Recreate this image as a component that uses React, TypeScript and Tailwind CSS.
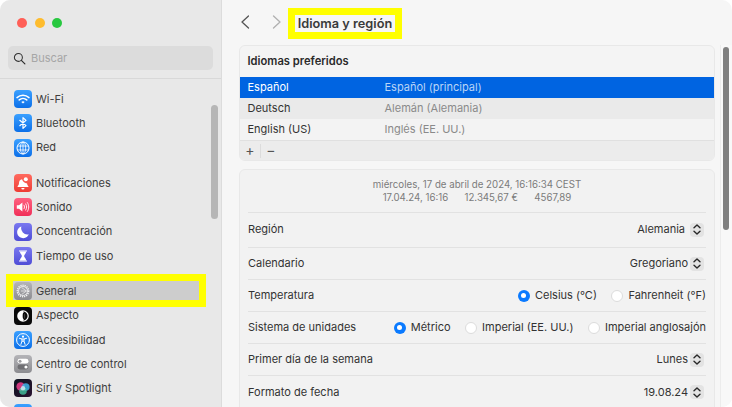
import React from "react";

const Tile = ({ cls, children }: { cls: string; children?: React.ReactNode }) => (
  <div className={`w-[18px] h-[18px] rounded-[4px] shrink-0 flex items-center justify-center overflow-hidden ${cls}`}>
    <svg viewBox="0 0 18 18" width="18" height="18" fill="none">{children}</svg>
  </div>
);

const blue = "bg-linear-to-b from-[#3aa0ff] to-[#0a6fe8]";
const red = "bg-linear-to-b from-[#ff6a5f] to-[#ee3b34]";
const pink = "bg-linear-to-b from-[#ff5f80] to-[#f02d58]";
const indigo = "bg-linear-to-b from-[#7a78f0] to-[#4f4cd6]";
const gray = "bg-linear-to-b from-[#b4b4b8] to-[#8c8c90]";

const icons: Record<string, React.ReactNode> = {
  wifi: (
    <Tile cls={blue}>
      <path d="M3 7.6c3.4-3.1 8.6-3.1 12 0" stroke="#fff" strokeWidth="1.5" strokeLinecap="round" />
      <path d="M5.2 9.9c2.2-2 5.4-2 7.6 0" stroke="#fff" strokeWidth="1.5" strokeLinecap="round" />
      <path d="M7.3 11.9c1-.8 2.4-.8 3.4 0L9 13.6z" fill="#fff" />
    </Tile>
  ),
  bt: (
    <Tile cls={blue}>
      <path d="M5.8 6.3 12 11.6 9 14.4V3.6l3 2.8-6.2 5.3" stroke="#fff" strokeWidth="1.2" strokeLinejoin="round" strokeLinecap="round" />
    </Tile>
  ),
  red: (
    <Tile cls={blue}>
      <circle cx="9" cy="9" r="6" stroke="#fff" strokeWidth="1" />
      <ellipse cx="9" cy="9" rx="2.7" ry="6" stroke="#fff" strokeWidth=".8" />
      <path d="M3.4 7h11.2M3.4 11h11.2M9 3v12" stroke="#fff" strokeWidth=".8" />
    </Tile>
  ),
  notif: (
    <Tile cls={red}>
      <path d="M8 5.2c-2 .3-3 1.8-3 3.8 0 1.6-.7 2.4-1.4 3.2v.8h10.8v-.8c-.7-.8-1.3-1.6-1.3-2.8C11 9.2 8.8 8 8 5.2z" fill="#fff" />
      <path d="M7.3 14h3.2a1.6 1.6 0 0 1-3.2 0z" fill="#fff" />
      <circle cx="11.8" cy="5.2" r="2" fill="#fff" />
    </Tile>
  ),
  sound: (
    <Tile cls={pink}>
      <path d="M2.8 7.2h2.2L8.4 4.6v8.8L5 10.8H2.8z" fill="#fff" />
      <path d="M10 7.2c.7 1.1.7 2.5 0 3.6M11.7 5.9c1.2 1.9 1.2 4.3 0 6.2M13.4 4.6c1.8 2.7 1.8 6.1 0 8.8" stroke="#fff" strokeWidth=".9" strokeLinecap="round" />
    </Tile>
  ),
  focus: (
    <Tile cls={indigo}>
      <path d="M7.4 3.4a6 6 0 1 0 7.4 7.8A6.2 6.2 0 0 1 7.4 3.4z" fill="#fff" />
    </Tile>
  ),
  time: (
    <Tile cls={indigo}>
      <path d="M5 3.4h8v1.1H5zM5 13.5h8v1.1H5z" fill="#fff" />
      <path d="M5.9 4.5h6.2c0 2.2-2 3.2-2 4.5s2 2.3 2 4.5H5.9c0-2.2 2-3.2 2-4.5s-2-2.3-2-4.5z" fill="#fff" />
    </Tile>
  ),
  general: (
    <Tile cls={gray}>
      <circle cx="9" cy="9" r="5.6" stroke="#f2f2f2" strokeWidth="1.6" strokeDasharray="1.2 .9" />
      <circle cx="9" cy="9" r="4.5" stroke="#f2f2f2" strokeWidth=".8" />
      <path d="M7.6 5.5 12.4 9H7M12.4 9l-4.8 3.5" stroke="#f2f2f2" strokeWidth=".7" strokeLinejoin="round" />
    </Tile>
  ),
  aspect: (
    <Tile cls="bg-[#0a0a0a]">
      <circle cx="9" cy="9" r="5.8" fill="#fff" />
      <path d="M9 4.4a4.6 4.6 0 0 1 0 9.2c1.9-1.6 1.9-7.6 0-9.2z" fill="#0a0a0a" />
      <path d="M9.4 5.6c1.5.6 1.5 6.2 0 6.8-1-1-1-5.8 0-6.8z" fill="#0a0a0a" />
    </Tile>
  ),
  access: (
    <Tile cls={blue}>
      <circle cx="9" cy="9" r="6.4" stroke="#fff" strokeWidth="1" />
      <circle cx="9" cy="5.7" r="1.1" fill="#fff" />
      <path d="M5.4 7.3 8 8v2.2L6.9 13.4M12.6 7.3 10 8v2.2l1.1 3.2M8 8h2M8.2 10.2h1.6" stroke="#fff" strokeWidth="1" strokeLinecap="round" />
    </Tile>
  ),
  control: (
    <Tile cls={gray}>
      <rect x="3.5" y="3.8" width="11" height="4.8" rx="2.4" fill="#fff" />
      <circle cx="6" cy="6.2" r="1.5" fill="#9a9a9e" />
      <rect x="3.5" y="9.6" width="11" height="4.8" rx="2.4" fill="#6f6f73" />
      <circle cx="12" cy="12" r="1.6" fill="#fff" />
    </Tile>
  ),
  siri: (
    <Tile cls="bg-linear-to-br from-[#0b1320] to-[#2a1230]">
      <circle cx="6.6" cy="7.5" r="4.2" fill="#ef3f8f" opacity=".85" />
      <circle cx="11.8" cy="8" r="3.8" fill="#3fb4e8" opacity=".85" />
      <circle cx="9" cy="12" r="3.8" fill="#45d0a8" opacity=".75" />
      <circle cx="9" cy="9.2" r="2.2" fill="#cfe6f2" opacity=".85" />
    </Tile>
  ),
  next: (
    <Tile cls={blue}>
      <circle cx="9" cy="5" r="1.6" fill="#fff" />
    </Tile>
  ),
};

const Row = ({ icon, label, selected }: { icon: string; label: string; selected?: boolean }) => (
  <div className="relative h-[24.3px] shrink-0 flex items-center pl-[14px]">
    {selected && (
      <div className="absolute left-[6px] w-[200px] top-[-5px] h-[33px] border-[7px] border-[#ffff00] bg-[#cdcdcd]" />
    )}
    <div className="relative flex items-center gap-[4px]">
      {icons[icon]}
      <span className="text-[11px] text-[#3e3e3e] whitespace-nowrap">{label}</span>
    </div>
  </div>
);

const Chevrons = () => (
  <svg viewBox="0 0 14 15" width="14" height="15" fill="none">
    <path d="M4 5.8 7 3 10 5.8M4 9.2 7 12 10 9.2" stroke="#2a2a2a" strokeWidth="1.4" strokeLinecap="round" strokeLinejoin="round" />
  </svg>
);

const Popup = ({ value, gap = "mr-[2px]" }: { value: string; gap?: string }) => (
  <div className="flex items-center">
    <span className={`text-[11px] text-[#333] ${gap}`}>{value}</span>
    <div className="w-[14px] h-[14px] rounded-[4px] bg-[#e3e3e3] flex items-center justify-center">
      <Chevrons />
    </div>
  </div>
);

const Radio = ({ label, on }: { label: string; on?: boolean }) => (
  <div className="flex items-center gap-[5px]">
    {on ? (
      <div className="w-[12px] h-[12px] rounded-full bg-[#0a7aff] flex items-center justify-center">
        <div className="w-[5px] h-[5px] rounded-full bg-white" />
      </div>
    ) : (
      <div className="w-[12px] h-[12px] rounded-full bg-white border border-[#dcdcdc]" />
    )}
    <span className="text-[11px] text-[#333] whitespace-nowrap">{label}</span>
  </div>
);

const Setting = ({ label, h, last, children }: { label: string; h: string; last?: boolean; children: React.ReactNode }) => (
  <div className={`flex items-center justify-between shrink-0 ${h} ${last ? "" : "border-b border-[#e2e2e2]"}`}>
    <span className="text-[11px] text-[#333] whitespace-nowrap">{label}</span>
    {children}
  </div>
);

const Lang = ({ a, b, cls, ca, cb }: { a: string; b: string; cls: string; ca: string; cb: string }) => (
  <div className={`h-[21px] flex items-center pl-[7.5px] text-[11px] ${cls}`}>
    <span className={`w-[137px] ${ca}`}>{a}</span>
    <span className={cb}>{b}</span>
  </div>
);

export default function App() {
  return (
    <div className="w-[732px] h-[407px] bg-white overflow-hidden font-['Inter',sans-serif]">
      <div className="w-full h-full flex rounded-[10px] overflow-hidden bg-[#f6f6f6]">
        {/* Sidebar */}
        <aside className="relative w-[222px] shrink-0 bg-[#e8e8e8] border-r border-[#dcdcdc] flex flex-col">
          <div className="h-[46px] shrink-0 flex items-start pt-[17.5px] pl-[17px] gap-[7.5px]">
            <div className="w-[10px] h-[10px] rounded-full bg-[#ff5f57]" />
            <div className="w-[10px] h-[10px] rounded-full bg-[#febc2e]" />
            <div className="w-[10px] h-[10px] rounded-full bg-[#28c840]" />
          </div>
          <div className="mx-[8px] w-[205px] h-[24px] shrink-0 rounded-[5px] bg-[#dcdcdc] flex items-center pl-[5px] gap-[5px]">
            <svg viewBox="0 0 14 14" width="13" height="13" fill="none">
              <circle cx="5.8" cy="5.8" r="4.3" stroke="#2f2f2f" strokeWidth="1.1" />
              <path d="m9 9 3.8 3.8" stroke="#2f2f2f" strokeWidth="1.3" strokeLinecap="round" />
            </svg>
            <span className="text-[11px] text-[#a6a6a6]">Buscar</span>
          </div>
          <div className="mt-[8px] h-px shrink-0 bg-[#d8d8d8]" />
          <div className="pt-[8px] flex flex-col">
            <Row icon="wifi" label="Wi-Fi" />
            <Row icon="bt" label="Bluetooth" />
            <Row icon="red" label="Red" />
            <div className="h-[11px] shrink-0" />
            <Row icon="notif" label="Notificaciones" />
            <Row icon="sound" label="Sonido" />
            <Row icon="focus" label="Concentración" />
            <Row icon="time" label="Tiempo de uso" />
            <div className="h-[11px] shrink-0" />
            <Row icon="general" label="General" selected />
            <Row icon="aspect" label="Aspecto" />
            <Row icon="access" label="Accesibilidad" />
            <Row icon="control" label="Centro de control" />
            <Row icon="siri" label="Siri y Spotlight" />
            <Row icon="next" label="" />
          </div>
          <div className="absolute left-[211px] top-[105px] w-[7px] h-[114px] rounded-full bg-[#b6b6b6]" />
        </aside>

        {/* Main */}
        <main className="relative flex-1 min-w-0 flex flex-col">
          <header className="h-[45px] shrink-0 flex items-center pl-[18px]">
            <svg viewBox="0 0 10 14" width="10" height="14" fill="none" className="mb-[1px]">
              <path d="M8.5 1 2 7l6.5 6" stroke="#555" strokeWidth="1.3" strokeLinecap="round" strokeLinejoin="round" />
            </svg>
            <svg viewBox="0 0 10 14" width="10" height="14" fill="none" className="ml-[22px] mb-[1px]">
              <path d="M1.5 1 8 7l-6.5 6" stroke="#b0b0b0" strokeWidth="1.3" strokeLinecap="round" strokeLinejoin="round" />
            </svg>
            <div className="ml-[6px] mt-[2px] border-[7px] border-[#ffff00] h-[31px] w-[114px] flex items-center justify-center">
              <span className="text-[12.75px] font-semibold text-[#3a3a3a] whitespace-nowrap">Idioma y región</span>
            </div>
          </header>

          <div className="w-[476px] ml-[17px] flex flex-col gap-[8px]">
            {/* Languages */}
            <section className="h-[116px] rounded-[6px] border border-[#e8e8e8] bg-[#f4f4f4] overflow-hidden flex flex-col">
              <div className="h-[31px] shrink-0 flex items-center pl-[7.5px] text-[11.2px] font-semibold text-[#2a2a2a]">Idiomas preferidos</div>
              <Lang a="Español" b="Español (principal)" cls="bg-[#0064e1]" ca="text-white" cb="text-[#b9d4f6]" />
              <Lang a="Deutsch" b="Alemán (Alemania)" cls="bg-[#eaeaea]" ca="text-[#333]" cb="text-[#8a8a8a]" />
              <Lang a="English (US)" b="Inglés (EE. UU.)" cls="bg-[#f3f3f3]" ca="text-[#333]" cb="text-[#8a8a8a]" />
              <div className="flex-1 bg-[#ececec] border-t border-[#e0e0e0] flex items-center text-[#555]">
                <span className="w-[20px] text-center text-[14px] leading-none mb-[2px]">+</span>
                <div className="w-px h-[14px] bg-[#dcdcdc]" />
                <span className="w-[20px] text-center text-[14px] leading-none mb-[2px]">−</span>
              </div>
            </section>

            {/* Region */}
            <section className="h-[300px] rounded-[6px] border border-[#e8e8e8] bg-[#f2f2f2] px-[8px] flex flex-col">
              <div className="h-[43px] shrink-0 border-b border-[#e2e2e2] flex flex-col items-center pt-[8px] text-[9.7px] leading-[13px] text-[#7b7b7b]">
                <span>miércoles, 17 de abril de 2024, 16:16:34 CEST</span>
                <span className="whitespace-pre">17.04.24, 16:16      12.345,67 €      4567,89</span>
              </div>
              <Setting label="Región" h="h-[35px] pb-[1px]"><div className="mr-[2px]"><Popup value="Alemania" gap="mr-[5px]" /></div></Setting>
              <Setting label="Calendario" h="h-[32px]"><div className="mr-[2px]"><Popup value="Gregoriano" /></div></Setting>
              <Setting label="Temperatura" h="h-[32px]">
                <div className="flex gap-[14.5px]"><Radio label="Celsius (°C)" on /><Radio label="Fahrenheit (°F)" /></div>
              </Setting>
              <Setting label="Sistema de unidades" h="h-[32px]">
                <div className="flex gap-[14.5px]"><Radio label="Métrico" on /><Radio label="Imperial (EE. UU.)" /><Radio label="Imperial anglosajón" /></div>
              </Setting>
              <Setting label="Primer día de la semana" h="h-[32px]"><div className="mr-[2px]"><Popup value="Lunes" /></div></Setting>
              <Setting label="Formato de fecha" h="h-[32px]" last><div className="mr-[2px]"><Popup value="19.08.24" /></div></Setting>
            </section>
          </div>

          {/* Scrollbar overlay */}
          <div className="absolute left-[498px] top-[45px] bottom-0 w-[12px] bg-[#f8f8f8] border-l border-[#ececec]">
            <div className="ml-[2px] mt-[2px] w-[6px] h-[183px] rounded-full bg-[#7f7f7f]" />
          </div>
        </main>
      </div>
    </div>
  );
}
